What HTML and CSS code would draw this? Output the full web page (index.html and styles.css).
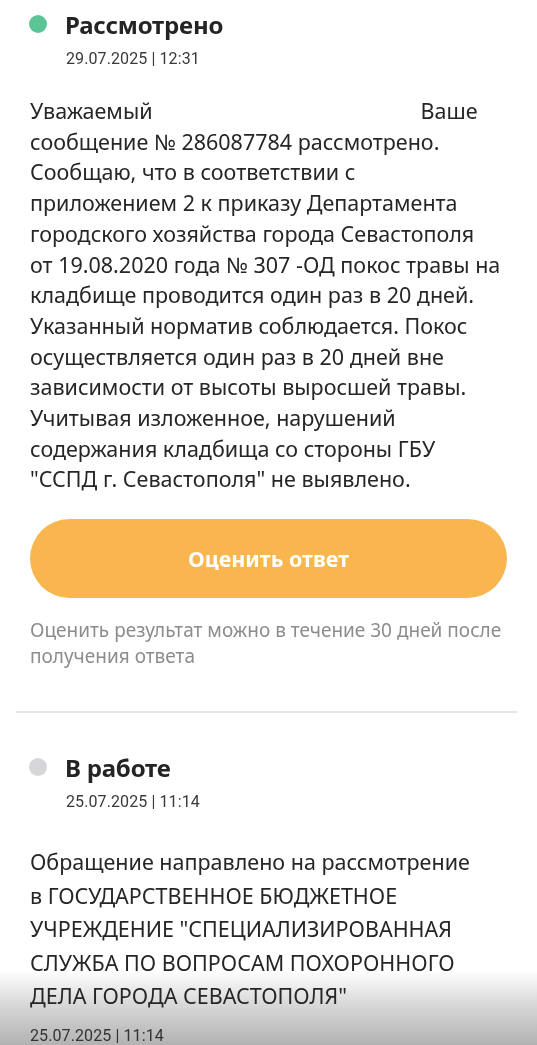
FILE: index.html
```html
<!DOCTYPE html>
<html lang="ru">
<head>
<meta charset="utf-8">
<link rel="stylesheet" href="styles.css">
</head>
<body>
<div class="shade"></div>
<div class="page">
  <section class="entry">
    <div class="head">
      <span class="dot dot-green"></span>
      <h2 class="title">Рассмотрено</h2>
    </div>
    <div class="date">29.07.2025 | 12:31</div>
    <p class="body body-a">Уважаемый<span class="gap"></span>Ваше<br>сообщение № 286087784 рассмотрено.<br>Сообщаю, что в соответствии с<br>приложением 2 к приказу Департамента<br>городского хозяйства города Севастополя<br>от 19.08.2020 года № 307 -ОД покос травы на<br>кладбище проводится один раз в 20 дней.<br>Указанный норматив соблюдается. Покос<br>осуществляется один раз в 20 дней вне<br>зависимости от высоты выросшей травы.<br>Учитывая изложенное, нарушений<br>содержания кладбища со стороны ГБУ<br>"ССПД г. Севастополя" не выявлено.</p>
    <button class="rate">Оценить ответ</button>
    <p class="hint">Оценить результат можно в течение 30 дней после<br>получения ответа</p>
  </section>
  <hr class="divider">
  <section class="entry entry-b">
    <div class="head">
      <span class="dot dot-gray"></span>
      <h2 class="title">В работе</h2>
    </div>
    <div class="date">25.07.2025 | 11:14</div>
    <p class="body body-b">Обращение направлено на рассмотрение<br>в ГОСУДАРСТВЕННОЕ БЮДЖЕТНОЕ<br>УЧРЕЖДЕНИЕ "СПЕЦИАЛИЗИРОВАННАЯ<br>СЛУЖБА ПО ВОПРОСАМ ПОХОРОННОГО<br>ДЕЛА ГОРОДА СЕВАСТОПОЛЯ"</p>
    <div class="date date-foot">25.07.2025 | 11:14</div>
  </section>
</div>
</body>
</html>
```
FILE: styles.css
```css
html, body {
  margin: 0;
  padding: 0;
  background: #ffffff;
  overflow: hidden;
}
body {
  font-family: "Noto Sans", "Open Sans", sans-serif;
  color: #232323;
  height: 1045px;
}
.page {
  position: relative;
  z-index: 1;
  padding: 0 16px 0 16px;
}
.entry {
  padding: 0 14px;
}
.head {
  display: flex;
  align-items: center;
  height: 48px;
}
.dot {
  width: 18px;
  height: 18px;
  border-radius: 50%;
  margin-left: -1px;
  margin-right: 18px;
  flex: none;
}
.dot-green { background: #5cc597; }
.dot-gray { background: #d6d6d8; }
.title {
  margin: 0;
  font-size: 24px;
  font-weight: 700;
  letter-spacing: -0.2px;
  color: #242424;
}
.date {
  margin-left: 36px;
  font-family: "Roboto", sans-serif;
  font-size: 16px;
  color: #3a3a3a;
  letter-spacing: 0.1px;
  line-height: 22px;
}
.body {
  margin: 0;
  font-size: 21.5px;
  line-height: 30.7px;
  color: #262626;
  white-space: nowrap;
}
.body-a {
  margin-top: 26px;
}
.gap {
  display: inline-block;
  width: 268px;
}
.rate {
  display: block;
  width: 100%;
  height: 79px;
  margin-top: 24px;
  border: none;
  border-radius: 40px;
  background: #f9b64f;
  color: #ffffff;
  font-family: "Noto Sans", "Open Sans", sans-serif;
  font-size: 21.5px;
  font-weight: 700;
}
.hint {
  margin: 19px 0 0 0;
  font-size: 19px;
  line-height: 26px;
  color: #8c8c8c;
  white-space: nowrap;
}
.divider {
  border: none;
  height: 2px;
  background: #e4e4e4;
  margin: 42px 4px 0 0;
}
.entry-b {
  margin-top: 30px;
}
.body-b {
  margin-top: 32px;
  line-height: 33.5px;
}
.date-foot {
  margin-left: 0;
  margin-top: 12px;
  color: #333333;
}
.shade {
  position: fixed;
  z-index: 0;
  left: 0;
  right: 0;
  bottom: 0;
  height: 75px;
  background: linear-gradient(to bottom, rgba(185,185,185,0) 0%, rgba(185,185,185,0.55) 45%, rgba(178,178,178,1) 100%);
  pointer-events: none;
}
```
